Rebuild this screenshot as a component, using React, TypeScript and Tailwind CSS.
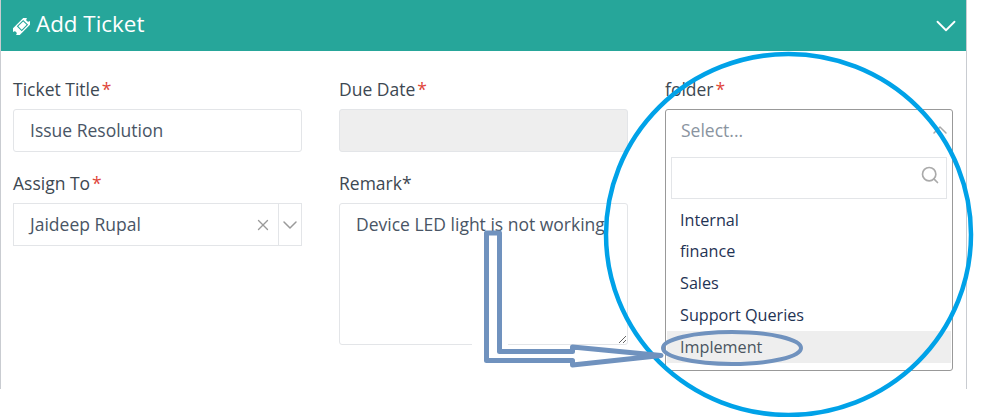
import { ChevronDown, ChevronUp, Search, X } from "lucide-react";

const font = "font-['Open_Sans',sans-serif]";

function Label({ text, star = true }: { text: string; star?: boolean }) {
  return (
    <label className="block h-6 mb-[7px] text-[17.5px] leading-[22px] text-[#3d4852]">
      {text}
      {star && <span className="ml-[2px] text-[#e0463a]">*</span>}
    </label>
  );
}

function TicketIcon() {
  return (
    <svg width="17" height="17" viewBox="0 0 16 16" className="mt-[2px]">
      <g transform="rotate(-45 8 8)">
        <path d="M-1 3.5H17V6.2A1.8 1.8 0 0 0 17 9.8V12.5H-1V9.8A1.8 1.8 0 0 0 -1 6.2Z" fill="#ffffff" />
        <rect x="5.5" y="5.2" width="7.5" height="5.6" fill="none" stroke="#26a69a" strokeWidth="1" />
      </g>
    </svg>
  );
}

const folders = ["Internal", "finance", "Sales", "Support Queries", "Implement"];

export default function App() {
  return (
    <div className={`relative w-[991px] h-[417px] overflow-hidden bg-white ${font}`}>
      <div className="w-[967px] h-[389px] border-x border-[#c9ccd1]">
        <div className="flex items-center justify-between h-[51px] pl-3 pr-[3px] bg-[#26a69a] text-white">
          <div className="flex items-center gap-[6px]">
            <TicketIcon />
            <span className="text-[22.4px] leading-none pb-[3px]">Add Ticket</span>
          </div>
          <ChevronDown size={34} strokeWidth={1.3} />
        </div>

        <div className="grid grid-cols-[289px_289px_288px] gap-x-[37px] pl-3 pt-[27px]">
          <div>
            <Label text="Ticket Title" />
            <input
              readOnly
              value="Issue Resolution"
              className={`block w-full h-[43px] mb-5 pl-4 pr-4 pb-[2px] rounded-[3px] border border-[#e3e5e8] text-[17.5px] text-[#495565] outline-none ${font}`}
            />
            <Label text="Assign To" />
            <div className="flex items-center h-[43px] border border-[#e3e5e8] text-[17.5px] text-[#495565]">
              <span className="flex-1 pl-4">Jaideep Rupal</span>
              <X size={18} strokeWidth={1.8} className="mr-[6px] text-[#9a9a9a]" />
              <div className="flex items-center justify-center w-[23px] h-full border-l border-[#e3e5e8]">
                <ChevronDown size={24} strokeWidth={1.5} className="shrink-0 text-[#9a9a9a]" />
              </div>
            </div>
          </div>

          <div>
            <Label text="Due Date" />
            <div className="h-[43px] mb-5 rounded-[3px] border border-[#e3e5e8] bg-[#eeeeee]" />
            <Label text="Remark*" star={false} />
            <textarea
              readOnly
              defaultValue="Device LED light is not working"
              className={`block w-full h-[142px] px-4 py-[8px] rounded-[3px] border border-[#e3e5e8] text-[17.5px] leading-6 text-[#495565] outline-none ${font}`}
            />
          </div>

          <div>
            <Label text="folder" />
            <div className="h-[262px] rounded-[3px] border border-[#999999] bg-white">
              <div className="flex items-center justify-between h-[42px] pl-[15px] pb-[2px] text-[17.5px] text-[#8a94a0]">
                <span>Select...</span>
                <ChevronUp size={24} strokeWidth={1.5} className="text-[#aaaaaa]" />
              </div>
              <div className="flex items-center justify-end h-[42px] mx-[5px] mt-[5px] pr-[6px] border border-[#e3e5e8]">
                <Search size={20} strokeWidth={2} className="mb-[7px] text-[#aaaaaa]" />
              </div>
              <ul className="mt-[5px] mx-px text-[16.2px] text-[#1f3354]">
                {folders.map((f) => (
                  <li
                    key={f}
                    className={`flex items-center h-[31.75px] pl-[13px] ${f === "Implement" ? "bg-[#eeeeee] text-[#4a5560]" : ""}`}
                  >
                    {f}
                  </li>
                ))}
              </ul>
            </div>
          </div>
        </div>
      </div>

      {/* hand drawn annotation on top of the form */}
      <svg className="absolute inset-0 pointer-events-none" width="991" height="417" fill="none">
        <ellipse cx="788.5" cy="234.5" rx="182.5" ry="180.5" stroke="#00a2e8" strokeWidth="4.5" />
        <rect x="472" y="343" width="36" height="3" fill="#ffffff" />
        <path
          d="M486.5 233H499.5V351.5H572.5V347L661 355.5L572.5 365V360.5H486.5Z"
          fill="#ffffff"
          stroke="#7092be"
          strokeWidth="5"
          strokeLinejoin="round"
        />
        <ellipse cx="732" cy="348" rx="69" ry="16" stroke="#7092be" strokeWidth="4" />
      </svg>
    </div>
  );
}
